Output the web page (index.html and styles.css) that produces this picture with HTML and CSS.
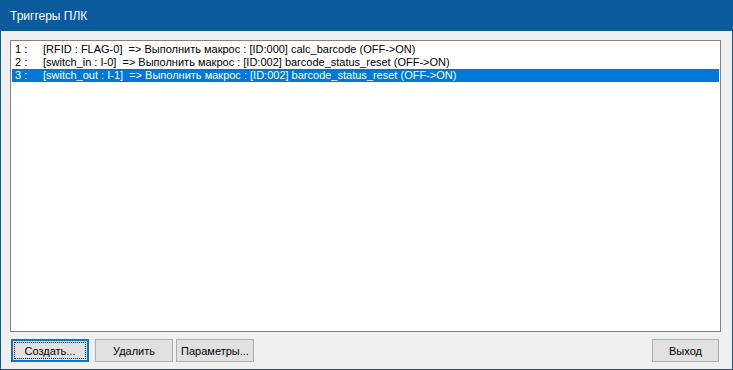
FILE: index.html
```html
<!DOCTYPE html>
<html lang="ru">

<head>
    <meta charset="UTF-8">
    <meta name="viewport" content="width=device-width, initial-scale=1.0">
    <title>Триггеры ПЛК</title>
    <link rel="stylesheet" href="styles.css">
</head>

<body>
    <div class="window">
        <div class="titlebar">Триггеры ПЛК</div>
        <div class="content">
            <ul class="listbox">
                <li class="row"><span class="num">1 :</span><span>[RFID : FLAG-0]&nbsp; =&gt; Выполнить макрос : [ID:000] calc_barcode (OFF-&gt;ON)</span></li>
                <li class="row"><span class="num">2 :</span><span>[switch_in : I-0]&nbsp; =&gt; Выполнить макрос : [ID:002] barcode_status_reset (OFF-&gt;ON)</span></li>
                <li class="row selected"><span class="num">3 :</span><span>[switch_out : I-1]&nbsp; =&gt; Выполнить макрос : [ID:002] barcode_status_reset (OFF-&gt;ON)</span></li>
            </ul>
            <div class="buttons">
                <button class="btn focused"><span class="focus-ring">Создать...</span></button>
                <button class="btn btn-delete">Удалить</button>
                <button class="btn">Параметры...</button>
                <button class="btn btn-exit">Выход</button>
            </div>
        </div>
    </div>
</body>

</html>
```

FILE: styles.css
```css
body {
    margin: 0;
    font-family: "Liberation Sans", "DejaVu Sans", sans-serif;
    font-size: 11px;
    color: #000;
}

.window {
    width: 733px;
    height: 370px;
    box-sizing: border-box;
    display: flex;
    flex-direction: column;
    background-color: #f0f0f0;
    border: 1px solid #0f5896;
    border-top: none;
}

.titlebar {
    height: 31px;
    margin: 0 -1px;
    padding-left: 10px;
    display: flex;
    align-items: center;
    background-color: #0a5a9c;
    color: white;
    font-size: 12px;
}

.content {
    flex: 1;
    display: flex;
    flex-direction: column;
    padding: 9px 11px 7px 9px;
    gap: 7px;
}

.listbox {
    flex: 1;
    margin: 0;
    padding: 2px 1px;
    list-style: none;
    background-color: white;
    border: 1px solid #828282;
}

.row {
    display: flex;
    height: 13px;
    line-height: 13px;
    padding-left: 3px;
    white-space: nowrap;
}

.num {
    width: 28px;
}

.selected {
    background-color: #0078d7;
    color: white;
}

.buttons {
    display: flex;
    height: 23px;
}

.btn {
    width: 78px;
    height: 23px;
    margin-right: 3px;
    padding: 0;
    font-family: inherit;
    font-size: 11px;
    color: #000;
    background-color: #e1e1e1;
    border: 1px solid #adadad;
    outline: none;
}

.btn-delete {
    margin-left: 3px;
}

.focused {
    margin-left: 1px;
    border: 2px solid #0078d7;
    padding: 1px;
}

.focus-ring {
    display: flex;
    align-items: center;
    justify-content: center;
    height: 100%;
    box-sizing: border-box;
    border: 1px dotted #000;
}

.btn-exit {
    width: 67px;
    margin-left: auto;
    margin-right: 2px;
}
```
